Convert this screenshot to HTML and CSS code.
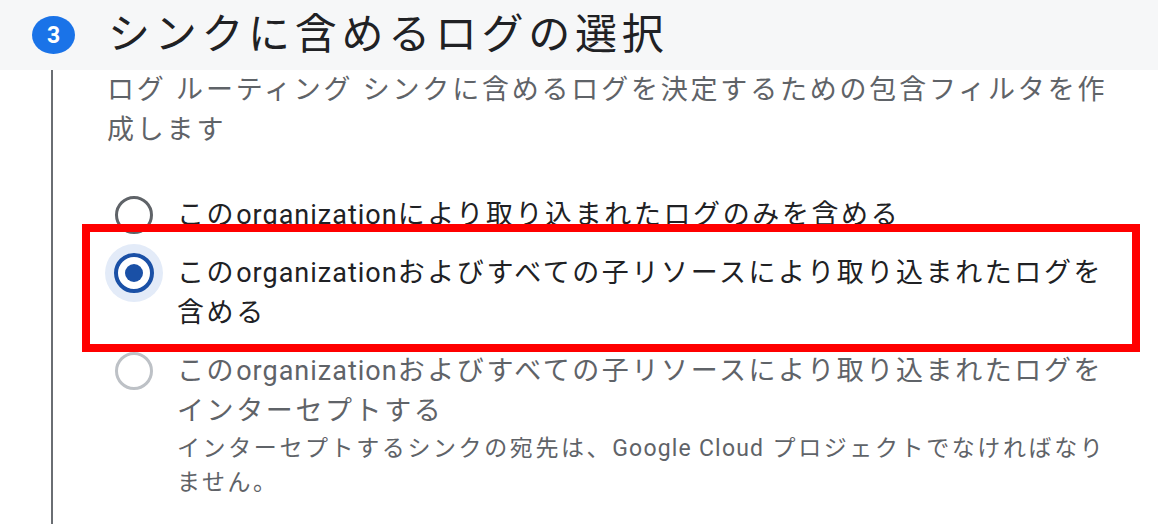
FILE: index.html
```html
<!DOCTYPE html>
<html>
<head>
    <meta charset="utf-8">
    <link rel="stylesheet" href="styles.css">
</head>
<body>
    <section class="step">
        <header class="step-head">
            <span class="step-num">3</span>
            <h2 class="step-title">シンクに含めるログの選択</h2>
        </header>
        <div class="step-body">
            <p class="step-desc">ログ ルーティング シンクに含めるログを決定するための包含フィルタを作成します</p>
            <div class="radio-group">
                <label class="radio-option">
                    <span class="radio-box"><span class="radio"></span></span>
                    <span class="radio-text">
                        <span class="radio-label">この<span class="latin">organization</span>により取り込まれたログのみを含める</span>
                    </span>
                </label>
                <label class="radio-option checked">
                    <span class="radio-box"><span class="radio"></span></span>
                    <span class="radio-text">
                        <span class="radio-label">この<span class="latin">organization</span>およびすべての子リソースにより取り込まれたログを含める</span>
                    </span>
                </label>
                <label class="radio-option disabled">
                    <span class="radio-box"><span class="radio"></span></span>
                    <span class="radio-text">
                        <span class="radio-label">この<span class="latin">organization</span>およびすべての子リソースにより取り込まれたログをインターセプトする</span>
                        <span class="radio-hint">インターセプトするシンクの宛先は、<span class="latin">Google Cloud</span> プロジェクトでなければなりません。</span>
                    </span>
                </label>
            </div>
        </div>
    </section>
    <div class="highlight"></div>
</body>
</html>
```

FILE: styles.css
```css
body {
    margin: 0;
    padding: 0;
    background-color: #fff;
    font-family: Roboto, "Noto Sans CJK JP", sans-serif;
    color: #202124;
    overflow: hidden;
}

.step-head {
    display: flex;
    align-items: center;
    gap: 33px;
    height: 70px;
    padding-left: 32px;
    background-color: #f6f7f8;
}

.step-num {
    display: flex;
    align-items: center;
    justify-content: center;
    width: 43px;
    height: 38px;
    border-radius: 50%;
    background-color: #1a73e8;
    color: #fff;
    font-size: 23px;
    font-weight: 700;
}

.step-title {
    margin: 0;
    font-size: 42px;
    font-weight: 400;
    line-height: 1;
    letter-spacing: 4.7px;
    color: #202124;
}

.step-body {
    min-height: calc(100vh - 70px);
    box-sizing: border-box;
    margin-left: 51px;
    padding: 0 38px 0 52px;
    border-left: 2px solid #6a6e73;
}

.step-desc {
    margin: 0 0 0 2px;
    font-size: 27px;
    line-height: 40px;
    letter-spacing: 2.8px;
    color: #5f6368;
}

.radio-group {
    display: flex;
    flex-direction: column;
    gap: 18px;
    margin-top: 45px;
}

.radio-option {
    display: flex;
    align-items: flex-start;
    gap: 14px;
    cursor: pointer;
}

.radio-box {
    display: flex;
    align-items: center;
    justify-content: center;
    flex: none;
    width: 58px;
    height: 40px;
}

.radio {
    position: relative;
    width: 38px;
    height: 38px;
    box-sizing: border-box;
    border: 3.5px solid #5f6368;
    border-radius: 50%;
}

.checked .radio {
    width: 40px;
    height: 40px;
    border: 4px solid #1a50a6;
    box-shadow: 0 0 0 9px #e3ebf8;
}

.checked .radio::after {
    content: "";
    position: absolute;
    top: 50%;
    left: 50%;
    width: 18px;
    height: 18px;
    margin: -9px 0 0 -9px;
    border-radius: 50%;
    background-color: #1a50a6;
}

.disabled .radio {
    border-color: #bdc1c6;
}

.radio-text {
    display: flex;
    flex-direction: column;
}

.radio-label {
    font-size: 27px;
    line-height: 40px;
    letter-spacing: 2.6px;
    color: #202124;
}

.disabled .radio-label {
    color: #5f6368;
}

.radio-label .latin {
    letter-spacing: 1px;
}

.radio-hint {
    margin-top: 1px;
    font-size: 23px;
    line-height: 34px;
    letter-spacing: 2.6px;
    color: #5f6368;
}

.radio-hint .latin {
    letter-spacing: 1.2px;
}

.highlight {
    position: absolute;
    top: 224px;
    left: 82px;
    width: 1058px;
    height: 128px;
    box-sizing: border-box;
    border: 8px solid #ff0000;
    pointer-events: none;
}
```
